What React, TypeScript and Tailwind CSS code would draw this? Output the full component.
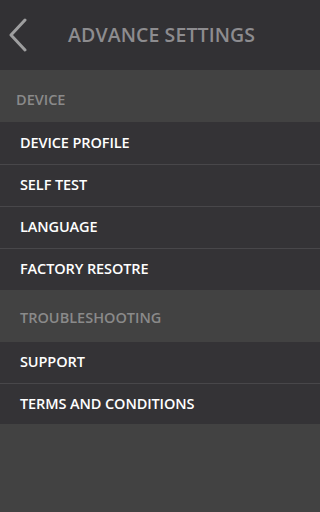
import React from 'react';

const sections = [
  { title: 'DEVICE', pad: 'pl-[16px] pt-[7px]', rowH: 'h-[42px]', items: ['DEVICE PROFILE', 'SELF TEST', 'LANGUAGE', 'FACTORY RESOTRE'] },
  { title: 'TROUBLESHOOTING', pad: 'pl-[20px] pt-[4px]', rowH: 'h-[41px]', items: ['SUPPORT', 'TERMS AND CONDITIONS'] },
];

const App: React.FC = () => {
  return (
    <div
      className="w-[320px] h-[512px] bg-[#424242] flex flex-col overflow-hidden"
      style={{ fontFamily: '"Open Sans", "Noto Sans", sans-serif' }}
    >
      {/* Header */}
      <div className="h-[70px] bg-[#323134] flex items-center shrink-0">
        <div className="w-[68px] flex items-center pl-[8px]">
          <svg width="20" height="34" viewBox="0 0 20 34" fill="none">
            <path d="M17 2 L3 17 L17 32" stroke="#9e9e9f" strokeWidth="3" strokeLinecap="round" strokeLinejoin="round" />
          </svg>
        </div>
        <span className="text-[19.5px] font-semibold text-[#8d8c8f] tracking-[0.1px]">ADVANCE SETTINGS</span>
      </div>

      {sections.map((section) => (
        <div key={section.title} className="flex flex-col">
          <div className={`h-[52px] flex items-center ${section.pad}`}>
            <span className="text-[14.5px] font-semibold text-[#8a8a8a]">{section.title}</span>
          </div>
          <div className="flex flex-col bg-[#343336]">
            {section.items.map((item, i) => (
              <div
                key={item}
                className={`${section.rowH} flex items-center pl-[20px] pb-[1px] ${i > 0 ? 'border-t border-[#48474a]' : ''}`}
              >
                <span className="text-[14.5px] font-semibold text-white tracking-[-0.1px]">{item}</span>
              </div>
            ))}
          </div>
        </div>
      ))}
    </div>
  );
};

export default App;
